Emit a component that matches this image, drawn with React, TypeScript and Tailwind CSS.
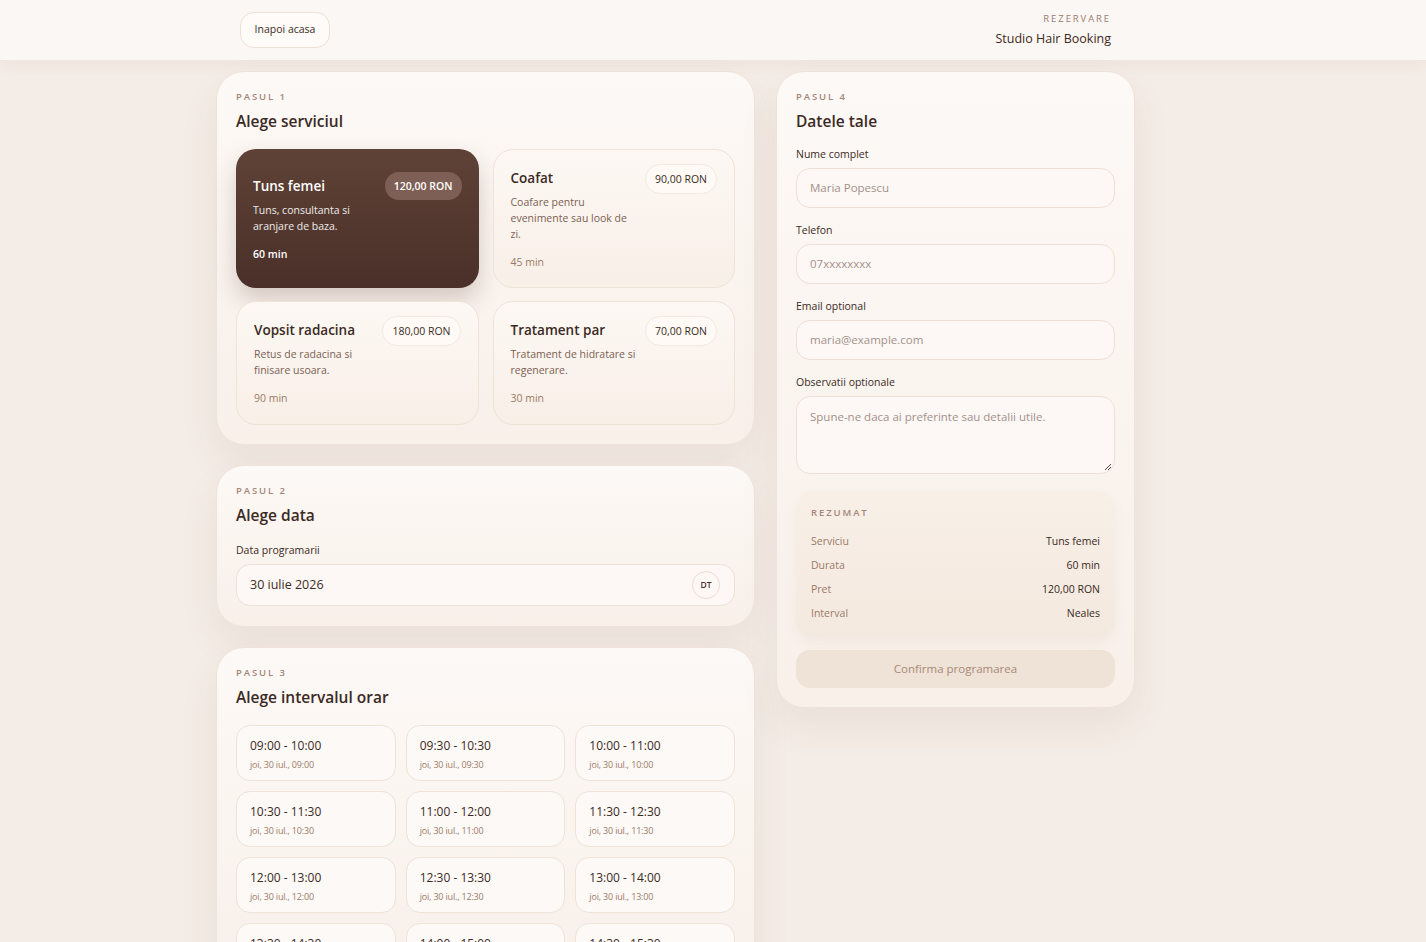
import { FunctionComponent } from "react";

interface Service {
  name: string;
  desc: string;
  price: string;
  duration: string;
}

const services: Service[] = [
  { name: "Tuns femei", desc: "Tuns, consultanta si aranjare de baza.", price: "120,00 RON", duration: "60 min" },
  { name: "Coafat", desc: "Coafare pentru evenimente sau look de zi.", price: "90,00 RON", duration: "45 min" },
  { name: "Vopsit radacina", desc: "Retus de radacina si finisare usoara.", price: "180,00 RON", duration: "90 min" },
  { name: "Tratament par", desc: "Tratament de hidratare si regenerare.", price: "70,00 RON", duration: "30 min" },
];

const slots = [
  ["09:00", "10:00"],
  ["09:30", "10:30"],
  ["10:00", "11:00"],
  ["10:30", "11:30"],
  ["11:00", "12:00"],
  ["11:30", "12:30"],
  ["12:00", "13:00"],
  ["12:30", "13:30"],
  ["13:00", "14:00"],
  ["13:30", "14:30"],
  ["14:00", "15:00"],
  ["14:30", "15:30"],
];

const Panel = ({ children, className = "" }: { children: React.ReactNode; className?: string }) => (
  <section
    className={`rounded-[28px] border border-[#efe3d9] bg-gradient-to-b from-[#fdf9f6] to-[#f8f0e9] px-[19px] shadow-[0_18px_40px_rgba(110,70,40,0.07)] ${className}`}
  >
    {children}
  </section>
);

const StepHead = ({ step, title }: { step: string; title: string }) => (
  <div>
    <p className="text-[9.5px] font-semibold uppercase leading-[12px] tracking-[0.2em] text-[#a4877a]">{step}</p>
    <h2 className="mt-[7px] text-[15.5px] font-semibold leading-[22px] text-[#3b2a24]">{title}</h2>
  </div>
);

const ServiceCard: FunctionComponent<{ s: Service; active?: boolean; tall?: boolean }> = ({ s, active, tall }) => (
  <div
    className={`flex flex-col justify-center rounded-[20px] px-[17px] ${tall ? "h-[139px]" : "h-[124px]"} ${
      active
        ? "bg-gradient-to-b from-[#5f4237] to-[#4a3029] text-white shadow-[0_12px_24px_rgba(80,45,30,0.22)]"
        : "border border-[#efe2d6] bg-gradient-to-b from-[#fdf8f4] to-[#f8efe7] text-[#3b2a24]"
    }`}
  >
    <div className="flex items-start justify-between gap-2">
      <div className="w-[128px]">
        <p className="text-[13.5px] font-semibold leading-[20px]">{s.name}</p>
        <p className={`mt-[6px] text-[10.5px] leading-[16px] ${active ? "text-white/90" : "text-[#7c5f53]"}`}>{s.desc}</p>
        <p className={`mt-[12px] text-[10.5px] leading-[16px] ${active ? "font-semibold text-white" : "text-[#9b7a68]"}`}>
          {s.duration}
        </p>
      </div>
      <span
        className={`mt-[-4px] whitespace-nowrap rounded-full px-[9px] py-[6px] text-[10.5px] leading-[16px] ${
          active ? "bg-[#7e5f55] font-semibold text-white" : "border border-[#f3e9e0] bg-[#fffaf6] text-[#3b2a24]"
        }`}
      >
        {s.price}
      </span>
    </div>
  </div>
);

const Field = ({ label, placeholder }: { label: string; placeholder: string }) => (
  <div>
    <p className="text-[10.5px] font-medium leading-[16px] text-[#3b2a24]">{label}</p>
    <div className="mt-[6px] flex h-[40px] items-center rounded-[14px] border border-[#eee0d4] bg-[#fdf8f5] px-[13px] text-[11.5px] text-[#a3908a]">
      {placeholder}
    </div>
  </div>
);

export default function App() {
  return (
    <div
      className="min-h-screen bg-[#f4ece6] text-[#3b2a24]"
      style={{ fontFamily: '"Open Sans", "Noto Sans", sans-serif' }}
    >
      <header className="h-[61px] border-b border-[#efe6df] bg-[#fbf7f4] shadow-[0_4px_14px_rgba(120,80,50,0.05)]">
        <div className="ml-[216px] flex h-full w-[919px] items-center justify-between px-6">
          <button className="h-[36px] w-[90px] rounded-[14px] border border-[#eddfd4] bg-[#fffbf8] text-[10.5px] font-medium text-[#3b2a24]">
            Inapoi acasa
          </button>
          <div className="text-right">
            <p className="text-[9.5px] font-medium uppercase leading-[14px] tracking-[0.2em] text-[#9b7b72]">Rezervare</p>
            <p className="mt-[4px] text-[12.5px] font-medium leading-[18px] text-[#3f2820]">Studio Hair Booking</p>
          </div>
        </div>
      </header>

      <main className="ml-[216px] flex w-[919px] items-start gap-[21px] pt-[10px]">
        <div className="flex w-[539px] flex-col gap-[20px]">
          <Panel className="pb-[19px] pt-[19px]">
            <StepHead step="Pasul 1" title="Alege serviciul" />
            <div className="mt-[17px] grid grid-cols-2 gap-x-[14px] gap-y-[13px]">
              {services.map((s, i) => (
                <ServiceCard key={s.name} s={s} active={i === 0} tall={i < 2} />
              ))}
            </div>
          </Panel>

          <Panel className="pb-[20px] pt-[19px]">
            <StepHead step="Pasul 2" title="Alege data" />
            <p className="mt-[16px] text-[10.5px] font-medium leading-[16px] text-[#3b2a24]">Data programarii</p>
            <div className="mt-[6px] flex h-[42px] items-center justify-between rounded-[14px] border border-[#eee0d4] bg-[#fdf8f5] pl-[13px] pr-[14px]">
              <span className="text-[12.5px] text-[#3b2a24]">30 iulie 2026</span>
              <span className="flex h-[28px] w-[28px] items-center justify-center rounded-full border border-[#eadccf] text-[8.5px] font-semibold text-[#4a3129]">
                DT
              </span>
            </div>
          </Panel>

          <Panel className="pb-[20px] pt-[19px]">
            <StepHead step="Pasul 3" title="Alege intervalul orar" />
            <div className="mt-[17px] grid grid-cols-3 gap-[10px]">
              {slots.map(([a, b]) => (
                <div key={a} className="h-[56px] rounded-[14px] border border-[#efe2d6] bg-[#fdf9f6] px-[13px] pt-[11px]">
                  <p className="text-[12px] leading-[18px] text-[#3b2a24]">
                    {a} - {b}
                  </p>
                  <p className="mt-[3px] text-[9px] leading-[14px] tracking-[-0.02em] text-[#9b7a68]">joi, 30 iul., {a}</p>
                </div>
              ))}
            </div>
          </Panel>
        </div>

        <Panel className="w-[359px] pb-[19px] pt-[19px]">
          <StepHead step="Pasul 4" title="Datele tale" />
          <div className="mt-[14px] flex flex-col gap-[14px]">
            <Field label="Nume complet" placeholder="Maria Popescu" />
            <Field label="Telefon" placeholder="07xxxxxxxx" />
            <Field label="Email optional" placeholder="maria@example.com" />
            <div>
              <p className="text-[10.5px] font-medium leading-[16px] text-[#3b2a24]">Observatii optionale</p>
              <div className="relative mt-[6px] h-[78px] rounded-[14px] border border-[#eee0d4] bg-[#fdf8f5] px-[13px] pt-[11px] text-[11.5px] text-[#a3908a]">
                Spune-ne daca ai preferinte sau detalii utile.
                <svg className="absolute bottom-[2px] right-[2px]" width="8" height="8" viewBox="0 0 8 8">
                  <path d="M7 1 L1 7 M7 4 L4 7" stroke="#5a4740" strokeWidth="1" />
                </svg>
              </div>
            </div>
          </div>

          <div className="mt-[17px] rounded-[18px] bg-gradient-to-b from-[#f8efe7] to-[#f4e9df] px-[15px] pb-[12px] pt-[15px] shadow-[0_6px_14px_rgba(120,80,50,0.05)]">
            <p className="text-[9.5px] font-semibold uppercase leading-[14px] tracking-[0.2em] text-[#a4877a]">Rezumat</p>
            <div className="mt-[9px] flex flex-col text-[10.5px] leading-[24px]">
              {[
                ["Serviciu", "Tuns femei"],
                ["Durata", "60 min"],
                ["Pret", "120,00 RON"],
                ["Interval", "Neales"],
              ].map(([k, v]) => (
                <div key={k} className="flex justify-between">
                  <span className="text-[#9b7a68]">{k}</span>
                  <span className="font-medium text-[#3b2a24]">{v}</span>
                </div>
              ))}
            </div>
          </div>

          <button className="mt-[13px] h-[38px] w-full rounded-[14px] bg-[#efe2d6] text-[11.5px] text-[#a88a78]">
            Confirma programarea
          </button>
        </Panel>
      </main>
    </div>
  );
}
